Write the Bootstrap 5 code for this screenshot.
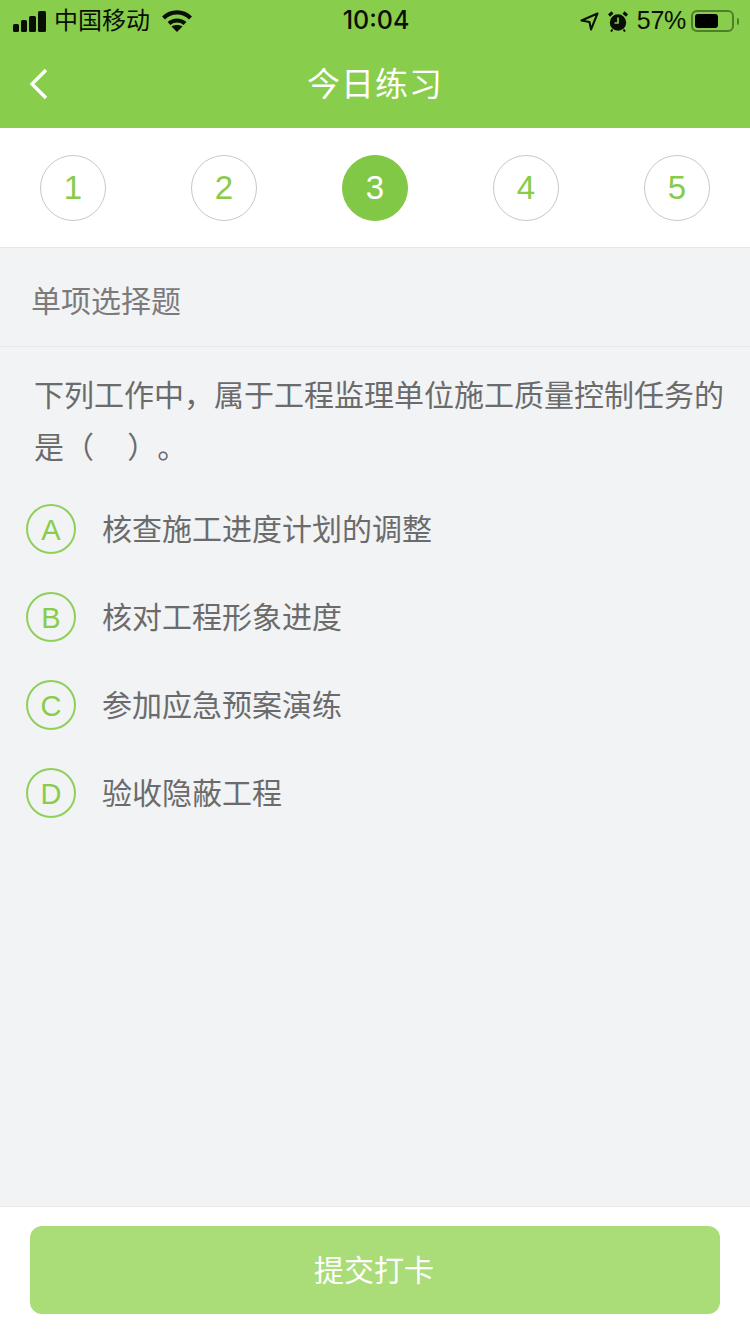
<!DOCTYPE html>
<html lang="zh-CN">
  <head>
    <meta charset="UTF-8" />
    <meta name="viewport" content="width=device-width, initial-scale=1.0" />
    <title>今日练习</title>
    <link href="https://cdn.jsdelivr.net/npm/bootstrap@5.3.6/dist/css/bootstrap.min.css" rel="stylesheet" />
    <style>
      html, body { height: 100%; }
      body {
        font-family: "Liberation Sans", "Noto Sans CJK SC", sans-serif;
        background: #f2f3f5;
        color: #666;
        text-spacing-trim: space-all;
      }
      .page-wrap { height: 1334px; }
      .app-header { background: #88cd4b; height: 128px; }
      .status-row { height: 42px; padding: 0 11px 0 13px; color: #0a0f05; font-size: 24px; }
      .status-time { font-size: 25px; font-weight: 500; font-family: Inter, "Liberation Sans", sans-serif; }
      .status-side { width: 340px; }
      .carrier-text { margin-left: -1px; }
      .status-right { font-size: 25px; letter-spacing: -.3px; }
      .batt-box { width: 43px; height: 22px; border: 2px solid #4f7f2b; border-radius: 6px; padding: 2px; margin-left: 5px; }
      .batt-fill { width: 23px; height: 100%; background: #000; border-radius: 3px; }
      .batt-tip { width: 2px; height: 7px; background: #4f7f2b; border-radius: 0 2px 2px 0; margin-left: 3px; }
      .title-row { height: 86px; }
      .title-text { color: #fff; font-size: 33px; letter-spacing: 1px; }
      .back-btn { left: 29px; top: 26px; }
      .arrow-icon { margin-right: 9px; }
      .alarm-icon { margin-right: 9px; }
      .step-bar { height: 120px; background: #fff; border-bottom: 1px solid #e6e7e9; padding: 27px 40px 0; }
      .step-dot {
        width: 66px; height: 66px; border: 1px solid #c8c8c8; border-radius: 50%;
        color: #88cc4a; font-size: 33px;
      }
      .step-dot.is-active { background: #81c846; border-color: #81c846; color: #fff; }
      .type-row { height: 99px; padding: 10px 0 0 31px; border-bottom: 1px solid #e6e7e9; font-size: 30px; color: #7b7b7b; line-height: 1; }
      .question { padding: 23px 24px 0 34px; font-size: 30px; line-height: 52px; color: #6b6b6b; }
      .opt-list { padding: 11px 0 0 26px; }
      .opt-row { height: 88px; gap: 26px; font-size: 30px; color: #6b6b6b; }
      .opt-letter {
        width: 50px; height: 50px; border: 2px solid #8fd05a; border-radius: 50%; padding-top: 4px;
        color: #88cc4a; font-size: 29px;
      }
      .foot-bar { height: 128px; background: #fff; border-top: 1px solid #e8e9eb; padding: 19px 30px 0; }
      .submit-btn { width: 690px; height: 88px; background: #aadc78; color: #fff; border: 0; border-radius: 12px; font-size: 30px; padding-right: 14px; }
    </style>
  </head>
  <body>
    <div class="page-wrap d-flex flex-column">
      <header class="app-header">
        <div class="status-row d-flex align-items-center justify-content-between">
          <div class="status-side d-flex align-items-center gap-2">
            <svg width="34" height="21" viewBox="0 0 34 21" fill="#0a0f05">
              <rect x="0" y="13" width="6" height="8" rx="1.5" />
              <rect x="8" y="9" width="6" height="12" rx="1.5" />
              <rect x="16" y="5" width="7" height="16" rx="1.5" />
              <rect x="25" y="0" width="8" height="21" rx="1.5" />
            </svg>
            <span class="carrier-text">中国移动</span>
            <svg class="ms-1" width="30" height="22" viewBox="0 0 30 22" fill="none" stroke="#0a0f05" stroke-width="4.2">
              <path d="M1.5 8 C9 .5 21 .5 28.5 8" />
              <path d="M7 13.5 C11.5 9.5 18.5 9.5 23 13.5" />
              <path d="M15 22 L9.5 16.5 C12.5 14.5 17.5 14.5 20.5 16.5 Z" fill="#0a0f05" stroke="none" />
            </svg>
          </div>
          <div class="status-time">10:04</div>
          <div class="status-side status-right d-flex align-items-center justify-content-end">
            <svg class="arrow-icon" width="19" height="19" viewBox="0 0 19 19" fill="none" stroke="#0a0f05" stroke-width="2" stroke-linejoin="round">
              <path d="M17.5 1.5 L1.5 8.5 L9.5 10 L11 17.5 Z" />
            </svg>
            <svg class="alarm-icon" width="20" height="21" viewBox="0 0 20 21">
              <circle cx="10" cy="11.5" r="8.2" fill="#0a0f05" />
              <path d="M10 6.5 V12 H6.5" fill="none" stroke="#88cd4b" stroke-width="1.7" />
              <path d="M1 4.5 L4.5 1.5 M19 4.5 L15.5 1.5" stroke="#0a0f05" stroke-width="3" />
              <path d="M4.5 18.5 L3 20.5 M15.5 18.5 L17 20.5" stroke="#0a0f05" stroke-width="2" />
            </svg>
            <span>57%</span>
            <div class="batt-box"><div class="batt-fill"></div></div>
            <div class="batt-tip"></div>
          </div>
        </div>
        <div class="title-row position-relative d-flex align-items-center justify-content-center">
          <svg class="back-btn position-absolute" width="20" height="32" viewBox="0 0 20 32" fill="none" stroke="#fff" stroke-width="3.4">
            <path d="M17 2 L3 16 L17 30" />
          </svg>
          <span class="title-text">今日练习</span>
        </div>
      </header>

      <div class="step-bar d-flex justify-content-between align-items-start">
        <div class="step-dot d-flex align-items-center justify-content-center">1</div>
        <div class="step-dot d-flex align-items-center justify-content-center">2</div>
        <div class="step-dot is-active d-flex align-items-center justify-content-center">3</div>
        <div class="step-dot d-flex align-items-center justify-content-center">4</div>
        <div class="step-dot d-flex align-items-center justify-content-center">5</div>
      </div>

      <div class="type-row d-flex align-items-center">单项选择题</div>

      <div class="question">下列工作中，属于工程监理单位施工质量控制任务的是（&nbsp;&nbsp;&nbsp;&nbsp;）。</div>

      <div class="opt-list">
        <div class="opt-row d-flex align-items-center">
          <div class="opt-letter d-flex align-items-center justify-content-center">A</div>
          <span>核查施工进度计划的调整</span>
        </div>
        <div class="opt-row d-flex align-items-center">
          <div class="opt-letter d-flex align-items-center justify-content-center">B</div>
          <span>核对工程形象进度</span>
        </div>
        <div class="opt-row d-flex align-items-center">
          <div class="opt-letter d-flex align-items-center justify-content-center">C</div>
          <span>参加应急预案演练</span>
        </div>
        <div class="opt-row d-flex align-items-center">
          <div class="opt-letter d-flex align-items-center justify-content-center">D</div>
          <span>验收隐蔽工程</span>
        </div>
      </div>

      <div class="foot-bar mt-auto">
        <button type="button" class="submit-btn btn">提交打卡</button>
      </div>
    </div>
    <script src="https://cdn.jsdelivr.net/npm/bootstrap@5.3.6/dist/js/bootstrap.bundle.min.js"></script>
  </body>
</html>
